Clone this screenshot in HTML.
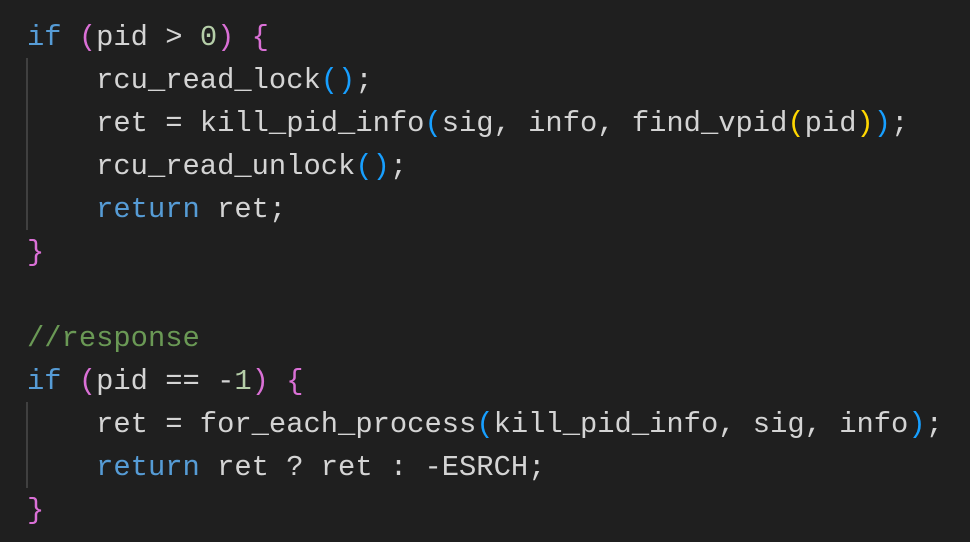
<!DOCTYPE html>
<html><head><style>
html,body{margin:0;padding:0;background:#1f1f1f;width:970px;height:542px;overflow:hidden}
pre{margin:0;position:absolute;left:27px;top:16px;font-family:"Liberation Mono",monospace;font-size:28.8px;line-height:43px;color:#d4d4d4}
.k{color:#569cd6}.m{color:#da70d6}.n{color:#b5cea8}.b{color:#179fff}.y{color:#ffd700}.c{color:#6a9955}
.g{position:absolute;left:26px;width:2px;background:#404040}
</style></head><body>
<div class="g" style="top:58px;height:172px"></div>
<div class="g" style="top:402px;height:86px"></div>
<pre><span class="k">if</span> <span class="m">(</span>pid &gt; <span class="n">0</span><span class="m">)</span> <span class="m">{</span>
    rcu_read_lock<span class="b">()</span>;
    ret = kill_pid_info<span class="b">(</span>sig, info, find_vpid<span class="y">(</span>pid<span class="y">)</span><span class="b">)</span>;
    rcu_read_unlock<span class="b">()</span>;
    <span class="k">return</span> ret;
<span class="m">}</span>

<span class="c">//response</span>
<span class="k">if</span> <span class="m">(</span>pid == -<span class="n">1</span><span class="m">)</span> <span class="m">{</span>
    ret = for_each_process<span class="b">(</span>kill_pid_info, sig, info<span class="b">)</span>;
    <span class="k">return</span> ret ? ret : -ESRCH;
<span class="m">}</span></pre>
</body></html>
